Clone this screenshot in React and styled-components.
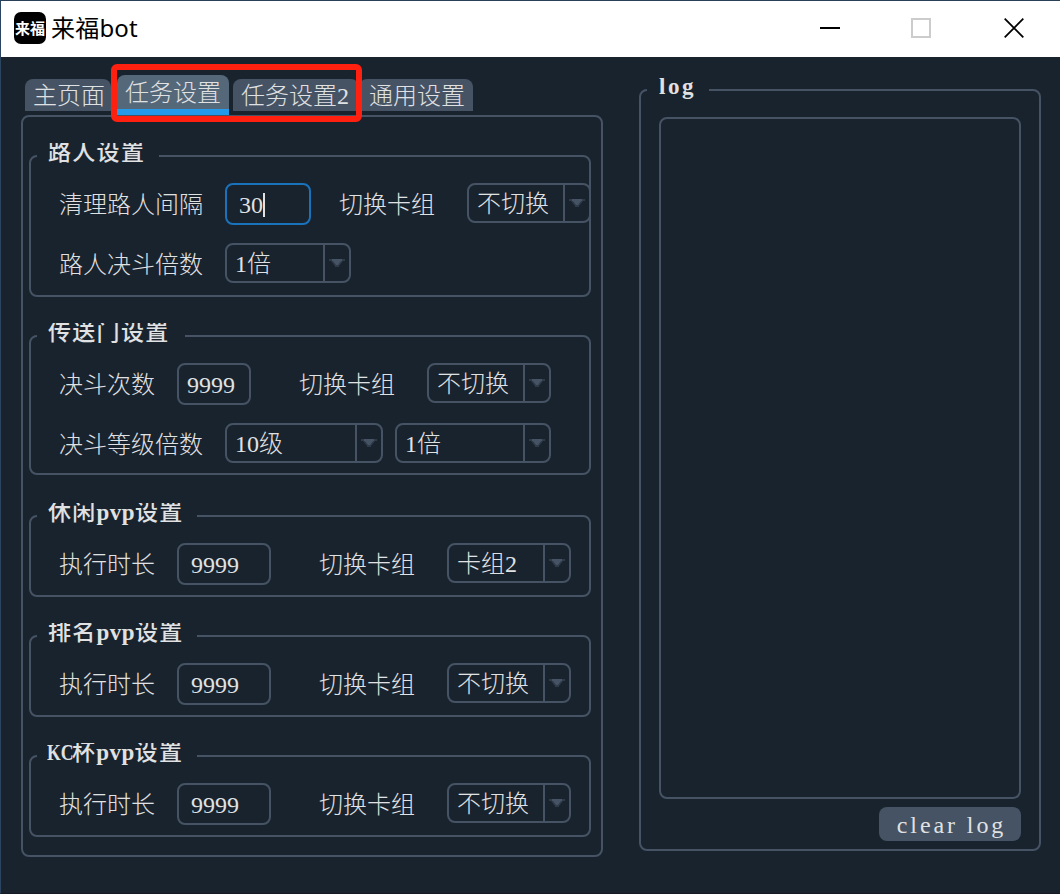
import React from 'react';
import styled, { createGlobalStyle } from 'styled-components';

const c = {
  bg: '#19232d',
  line: '#455364',
  text: '#e0e1e3',
  tabOn: '#54687a',
  accent: '#259ae9',
  focus: '#1a72bb',
};

const Global = createGlobalStyle`
  * { box-sizing: border-box; }
  body { margin: 0; background: ${c.bg}; }
`;

const Window = styled.div`
  width: 1060px;
  height: 894px;
  background: ${c.bg};
  border-top: 1px solid #2a3f58;
  border-left: 1px solid #2b4560;
  border-bottom: 1px solid #141b26;
  color: ${c.text};
  font: 300 24px/26px 'Liberation Serif', 'Noto Sans CJK SC', serif;
  white-space: nowrap;
  overflow: hidden;
`;

const TitleBar = styled.header`
  display: flex;
  align-items: center;
  height: 56px;
  padding: 0 36px 2px 13px;
  background: #fff;
  color: #000;
`;

const Logo = styled.div`
  display: flex;
  align-items: center;
  justify-content: center;
  width: 32px;
  height: 32px;
  border-radius: 7px;
  background: #000;
  color: #fff;
  font: 700 15px/30px 'Noto Sans CJK SC', sans-serif;
`;

const AppName = styled.h1`
  flex: 1;
  margin: 0 0 0 5px;
  font: 400 24px/32px 'Noto Sans', 'Noto Sans CJK SC', sans-serif;
  letter-spacing: 0.2px;
`;

const WindowButtons = styled.div`
  display: flex;
  gap: 73px;
  align-items: center;
  svg { display: block; width: 20px; height: 20px; fill: none; }
  svg:first-child { margin-right: -2px; }
`;

const Body = styled.main`
  display: flex;
  align-items: flex-start;
  padding: 18px 0 0 20px;
`;

const Left = styled.div`
  width: 582px;
`;

const TabBar = styled.nav`
  display: flex;
  align-items: flex-start;
  height: 40px;
  padding: 4px 0 0 4px;
`;

const Tab = styled.div`
  width: ${(p) => p.$w}px;
  height: 32px;
  padding-left: ${(p) => p.$pad || 8}px;
  border-radius: 8px 8px 0 0;
  background: ${c.line};
  line-height: 34px;
`;

const ActiveTab = styled(Tab)`
  height: 40px;
  margin-top: -4px;
  border-bottom: 6px solid ${c.accent};
  background: ${c.tabOn};
  line-height: 36px;
`;

const MarkedTabs = styled.div`
  position: relative;
  display: flex;
  gap: 4px;
  margin-left: 6px;
`;

const Marker = styled.div`
  position: absolute;
  z-index: 1;
  left: -6px;
  top: -15px;
  width: 251px;
  height: 58px;
  border: 6px solid #ff2010;
  border-radius: 6px;
`;

const Pane = styled.div`
  height: 742px;
  padding: 26px 10px 0 6px;
  border: 2px solid ${c.line};
  border-radius: 8px;
`;

const Group = styled.fieldset`
  min-width: 0;
  height: ${(p) => p.$h}px;
  margin: 0 0 ${(p) => p.$gap || 26}px;
  padding: 14px 0 0 28px;
  border: 2px solid ${c.line};
  border-radius: 8px;
`;

const Legend = styled.legend`
  width: ${(p) => p.$w}px;
  height: 26px;
  margin-left: -22px;
  padding: 0 0 0 11px;
  overflow: hidden;
  font: 700 23px/20px 'Liberation Serif', 'Noto Sans CJK SC Medium', 'Noto Sans CJK SC', serif;
  letter-spacing: 1.3px;
`;

const Latin = styled.span`
  letter-spacing: 0.4px;
`;

const Condensed = styled.span`
  display: inline-block;
  width: 24px;
  margin-left: -1px;
  margin-right: 1px;
  letter-spacing: 0;
  transform: scaleX(0.77);
  transform-origin: 0 50%;
`;

const Row = styled.div`
  display: flex;
  align-items: flex-start;
  height: 42px;
  margin-bottom: 18px;
`;

const Label = styled.label`
  width: ${(p) => p.$w}px;
  margin-left: ${(p) => p.$ml || 0}px;
  flex: none;
  line-height: 44px;
`;

const Field = styled.div`
  display: flex;
  align-items: center;
  flex: none;
  width: ${(p) => p.$w}px;
  height: 42px;
  padding: 2px 0 0 ${(p) => p.$pad || 12}px;
  border: 2px solid ${(p) => (p.$focus ? c.focus : c.line)};
  border-radius: 8px;
`;

const Caret = styled.span`
  width: 2px;
  height: 24px;
  background: ${c.text};
`;

const ComboBox = styled.div`
  display: flex;
  flex: none;
  width: ${(p) => p.$w}px;
  height: 40px;
  margin-right: 12px;
  border: 2px solid ${c.line};
  border-radius: 8px;
`;

const ComboText = styled.span`
  flex: 1;
  padding-left: 8px;
  line-height: 38px;
`;

const ComboArrow = styled.span`
  display: flex;
  justify-content: center;
  width: 26px;
  padding-top: 14px;
  border-left: 2px solid ${c.line};
  svg { width: 16px; height: 8px; fill: ${c.line}; }
`;

const LogGroup = styled.fieldset`
  width: 402px;
  height: 774px;
  margin: 2px 0 0 36px;
  padding: 14px 18px 0;
  border: 2px solid ${c.line};
  border-radius: 8px;
`;

const LogLegend = styled(Legend)`
  margin-left: -12px;
  padding-left: 12px;
  line-height: 19px;
  letter-spacing: 2.6px;
`;

const LogView = styled.div`
  height: 682px;
  border: 2px solid ${c.line};
  border-radius: 8px;
`;

const ClearButton = styled.button`
  display: block;
  width: 142px;
  height: 34px;
  margin: 8px 0 0 auto;
  padding: 2px 0 0 3px;
  border: 0;
  border-radius: 8px;
  background: ${c.line};
  color: ${c.text};
  font: inherit;
  letter-spacing: 2.9px;
`;

const Combo = ({ w = 124, children }) => (
  <ComboBox $w={w}>
    <ComboText>{children}</ComboText>
    <ComboArrow>
      <svg viewBox="0 0 16 8">
        <path opacity=".5" d="M0 0H16V2H14L10 7V8H6V7L2 2H0Z" />
        <path d="M3 0H13V2H12L9 6H7L4 2H3Z" />
      </svg>
    </ComboArrow>
  </ComboBox>
);

const PvpGroup = ({ name, deck }) => (
  <Group $h={94}>
    <Legend $w={160}>{name}<Latin>pvp</Latin>设置</Legend>
    <Row>
      <Label $w={118}>执行时长</Label>
      <Field $w={94}>9999</Field>
      <Label $w={128} $ml={48}>切换卡组</Label>
      <Combo>{deck}</Combo>
    </Row>
  </Group>
);

export default function App() {
  return (
    <Window>
      <Global />
      <TitleBar>
        <Logo>来福</Logo>
        <AppName>来福bot</AppName>
        <WindowButtons>
          <svg viewBox="0 0 20 20" stroke="#000" strokeWidth="2"><path d="M0 10H20" /></svg>
          <svg viewBox="0 0 20 20" stroke="#ccc" strokeWidth="2"><path d="M1 1H19V19H1Z" /></svg>
          <svg viewBox="0 0 20 20" stroke="#000" strokeWidth="1.8"><path d="M.7.7L19.3 19.3M19.3.7L.7 19.3" /></svg>
        </WindowButtons>
      </TitleBar>
      <Body>
        <Left>
          <TabBar>
            <Tab $w={86}>主页面</Tab>
            <MarkedTabs>
              <ActiveTab $w={112}>任务设置</ActiveTab>
              <Tab $w={126}>任务设置2</Tab>
              <Marker />
            </MarkedTabs>
            <Tab $w={114} $pad={10}>通用设置</Tab>
          </TabBar>
          <Pane>
            <Group $h={154}>
              <Legend $w={122}>路人设置</Legend>
              <Row>
                <Label $w={166}>清理路人间隔</Label>
                <Field $w={86} $focus>30<Caret /></Field>
                <Label $w={128} $ml={28}>切换卡组</Label>
                <Combo>不切换</Combo>
              </Row>
              <Row>
                <Label $w={166}>路人决斗倍数</Label>
                <Combo w={126}>1倍</Combo>
              </Row>
            </Group>
            <Group $h={152} $gap={28}>
              <Legend $w={148}>传送门设置</Legend>
              <Row>
                <Label $w={118}>决斗次数</Label>
                <Field $w={74} $pad={8}>9999</Field>
                <Label $w={128} $ml={48}>切换卡组</Label>
                <Combo>不切换</Combo>
              </Row>
              <Row>
                <Label $w={166}>决斗等级倍数</Label>
                <Combo w={158}>10级</Combo>
                <Combo w={156}>1倍</Combo>
              </Row>
            </Group>
            <PvpGroup name="休闲" deck="卡组2" />
            <PvpGroup name="排名" deck="不切换" />
            <PvpGroup name={<><Condensed>KC</Condensed>杯</>} deck="不切换" />
          </Pane>
        </Left>
        <LogGroup>
          <LogLegend $w={62}>log</LogLegend>
          <LogView />
          <ClearButton>clear log</ClearButton>
        </LogGroup>
      </Body>
    </Window>
  );
}
